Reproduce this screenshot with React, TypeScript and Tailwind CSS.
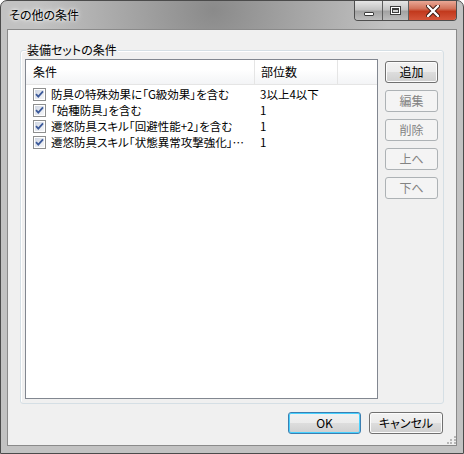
import React from 'react';

interface Row {
    label: string;
    count: string;
}

const rows: Row[] = [
    { label: '防具の特殊効果に「G級効果」を含む', count: '3以上4以下' },
    { label: '「始種防具」を含む', count: '1' },
    { label: '遷悠防具スキル「回避性能+2」を含む', count: '1' },
    { label: '遷悠防具スキル「状態異常攻撃強化」を含む', count: '1' },
];

const sideButtons = [
    { label: '追加', enabled: true },
    { label: '編集', enabled: false },
    { label: '削除', enabled: false },
    { label: '上へ', enabled: false },
    { label: '下へ', enabled: false },
];

const CheckBox: React.FC = () => (
    <svg width="13" height="13" viewBox="0 0 13 13" className="shrink-0">
        <defs>
            <linearGradient id="cbfill" x1="0" y1="0" x2="1" y2="1">
                <stop offset="0" stopColor="#cfd6e3" />
                <stop offset="1" stopColor="#f6f7f9" />
            </linearGradient>
        </defs>
        <rect x="0.5" y="0.5" width="12" height="12" fill="#fff" stroke="#8e8f8f" />
        <rect x="2" y="2" width="9" height="9" fill="url(#cbfill)" />
        <path d="M3 6.2 L5.3 8.6 L10 3.4" fill="none" stroke="#3c5a9a" strokeWidth="1.8" />
    </svg>
);

const WinButton: React.FC<{ label: string; enabled?: boolean; isDefault?: boolean; className?: string }> = ({ label, enabled = true, isDefault = false, className = '' }) => {
    if (!enabled) {
        return (
            <div className={`h-[22px] flex items-center justify-center rounded-[3px] border border-[#adb2b5] bg-[#f4f4f4] text-[#838383] ${className}`}>
                {label}
            </div>
        );
    }
    return (
        <div
            className={`h-[22px] flex items-center justify-center rounded-[3px] border text-black bg-[linear-gradient(#f2f2f2_0%,#ebebeb_50%,#dddddd_51%,#cfcfcf_100%)] ${isDefault ? 'border-[#3c7fb1] shadow-[inset_0_0_0_1px_#48d1ff]' : 'border-[#707070] shadow-[inset_0_0_0_1px_#fcfcfc]'} ${className}`}
        >
            {label}
        </div>
    );
};

export default function App() {
    return (
        <div className="w-[464px] h-[454px] flex flex-col rounded-t-[7px] border border-[#4b4b4b] bg-[radial-gradient(ellipse_38%_32%_at_46%_2%,#8a8a8a_0%,#a6a6a6_50%,#c2c2c2_100%)] font-['Noto_Sans_CJK_JP','Noto_Sans',sans-serif] [font-feature-settings:'palt'] text-[12px] leading-none text-black select-none">
            {/* Title bar */}
            <div className="h-[28px] flex items-start justify-between shrink-0">
                <span className="pl-[8px] pt-[8px] text-[12px] text-black [text-shadow:0_0_6px_#ffffff,0_0_3px_#ffffff]">その他の条件</span>
                <div className="mr-[6px] flex h-[20px] rounded-b-[4px] border border-t-0 border-[#4e4e4e] overflow-hidden">
                    <div className="w-[28px] flex items-center justify-center border-r border-[#5e5e5e] bg-[linear-gradient(#e6e6e6_0%,#c4c4c4_45%,#a3a3a3_55%,#bdbdbd_100%)]">
                        <div className="w-[10px] h-[4px] mt-[6px] bg-white border border-[#3d3d3d] rounded-[1px]" />
                    </div>
                    <div className="w-[26px] flex items-center justify-center border-r border-[#5e5e5e] bg-[linear-gradient(#e6e6e6_0%,#c4c4c4_45%,#a3a3a3_55%,#bdbdbd_100%)]">
                        <div className="w-[11px] h-[9px] border border-[#3d3d3d] bg-white p-[1px]">
                            <div className="w-full h-full border border-[#3d3d3d] border-t-2 bg-[#d0d0d0]" />
                        </div>
                    </div>
                    <div className="w-[47px] flex items-center justify-center bg-[linear-gradient(#e9a896_0%,#d2725a_40%,#c2391d_55%,#d5553a_100%)]">
                        <svg width="14" height="12" viewBox="0 0 14 12">
                            <path d="M2 1 L12 11 M12 1 L2 11" stroke="#3b1a12" strokeWidth="4.2" strokeLinecap="round" />
                            <path d="M2 1 L12 11 M12 1 L2 11" stroke="#ffffff" strokeWidth="2.4" strokeLinecap="round" />
                        </svg>
                    </div>
                </div>
            </div>

            {/* Client area */}
            <div className="mx-[6px] mb-[7px] flex-1 flex flex-col border border-[#8a8a8a] bg-[#f0f0f0] px-[12px] pt-[20px]">
                {/* Group box */}
                <div className="relative h-[354px] flex gap-[7px] border border-[#d5dfe5] rounded-[3px] shadow-[inset_1px_1px_0_#ffffff] pl-[4px] pr-[5px] pt-[8px] pb-[4px]">
                    <span className="absolute -top-[7px] left-[5px] bg-[#f0f0f0] px-[1px]">装備セットの条件</span>

                    {/* List view */}
                    <div className="w-[353px] h-[340px] border border-[#828790] bg-white flex flex-col">
                        <div className="h-[25px] flex shrink-0 border-b border-[#e5e5e5] bg-[linear-gradient(#ffffff_0%,#ffffff_40%,#f3f4f6_100%)]">
                            <div className="w-[229px] flex items-center pl-[7px] border-r border-[#e5e5e5]">条件</div>
                            <div className="w-[83px] flex items-center pl-[6px] border-r border-[#e5e5e5]">部位数</div>
                            <div className="flex-1" />
                        </div>
                        <div className="flex flex-col pt-[1px] text-[11.5px]">
                            {rows.map((r, i) => (
                                <div key={i} className="h-[16px] flex items-center">
                                    <div className="w-[229px] shrink-0 flex items-center pl-[7px] gap-[5px] pr-[3px] min-w-0">
                                        <CheckBox />
                                        <span className="truncate leading-[16px]">{r.label}</span>
                                    </div>
                                    <div className="pl-[5px] leading-[16px]">{r.count}</div>
                                </div>
                            ))}
                        </div>
                    </div>

                    {/* Side buttons */}
                    <div className="flex flex-col gap-[7px] pt-[2px]">
                        {sideButtons.map((b) => (
                            <WinButton key={b.label} label={b.label} enabled={b.enabled} className="w-[53px]" />
                        ))}
                    </div>
                </div>

                {/* Bottom buttons */}
                <div className="flex justify-end gap-[8px] mt-[8px] pr-[1px]">
                    <WinButton label="OK" isDefault className="w-[73px]" />
                    <WinButton label="キャンセル" className="w-[74px]" />
                </div>

                <div className="flex-1" />
                <div className="self-end -mr-[12px] mb-[1px] grid grid-cols-3 gap-[1px] w-[9px]">
                    <span />
                    <span />
                    <span className="w-[2px] h-[2px] bg-[#b8b8b8]" />
                    <span />
                    <span className="w-[2px] h-[2px] bg-[#b8b8b8]" />
                    <span className="w-[2px] h-[2px] bg-[#b8b8b8]" />
                    <span className="w-[2px] h-[2px] bg-[#b8b8b8]" />
                    <span className="w-[2px] h-[2px] bg-[#b8b8b8]" />
                    <span className="w-[2px] h-[2px] bg-[#b8b8b8]" />
                </div>
            </div>
        </div>
    );
}
